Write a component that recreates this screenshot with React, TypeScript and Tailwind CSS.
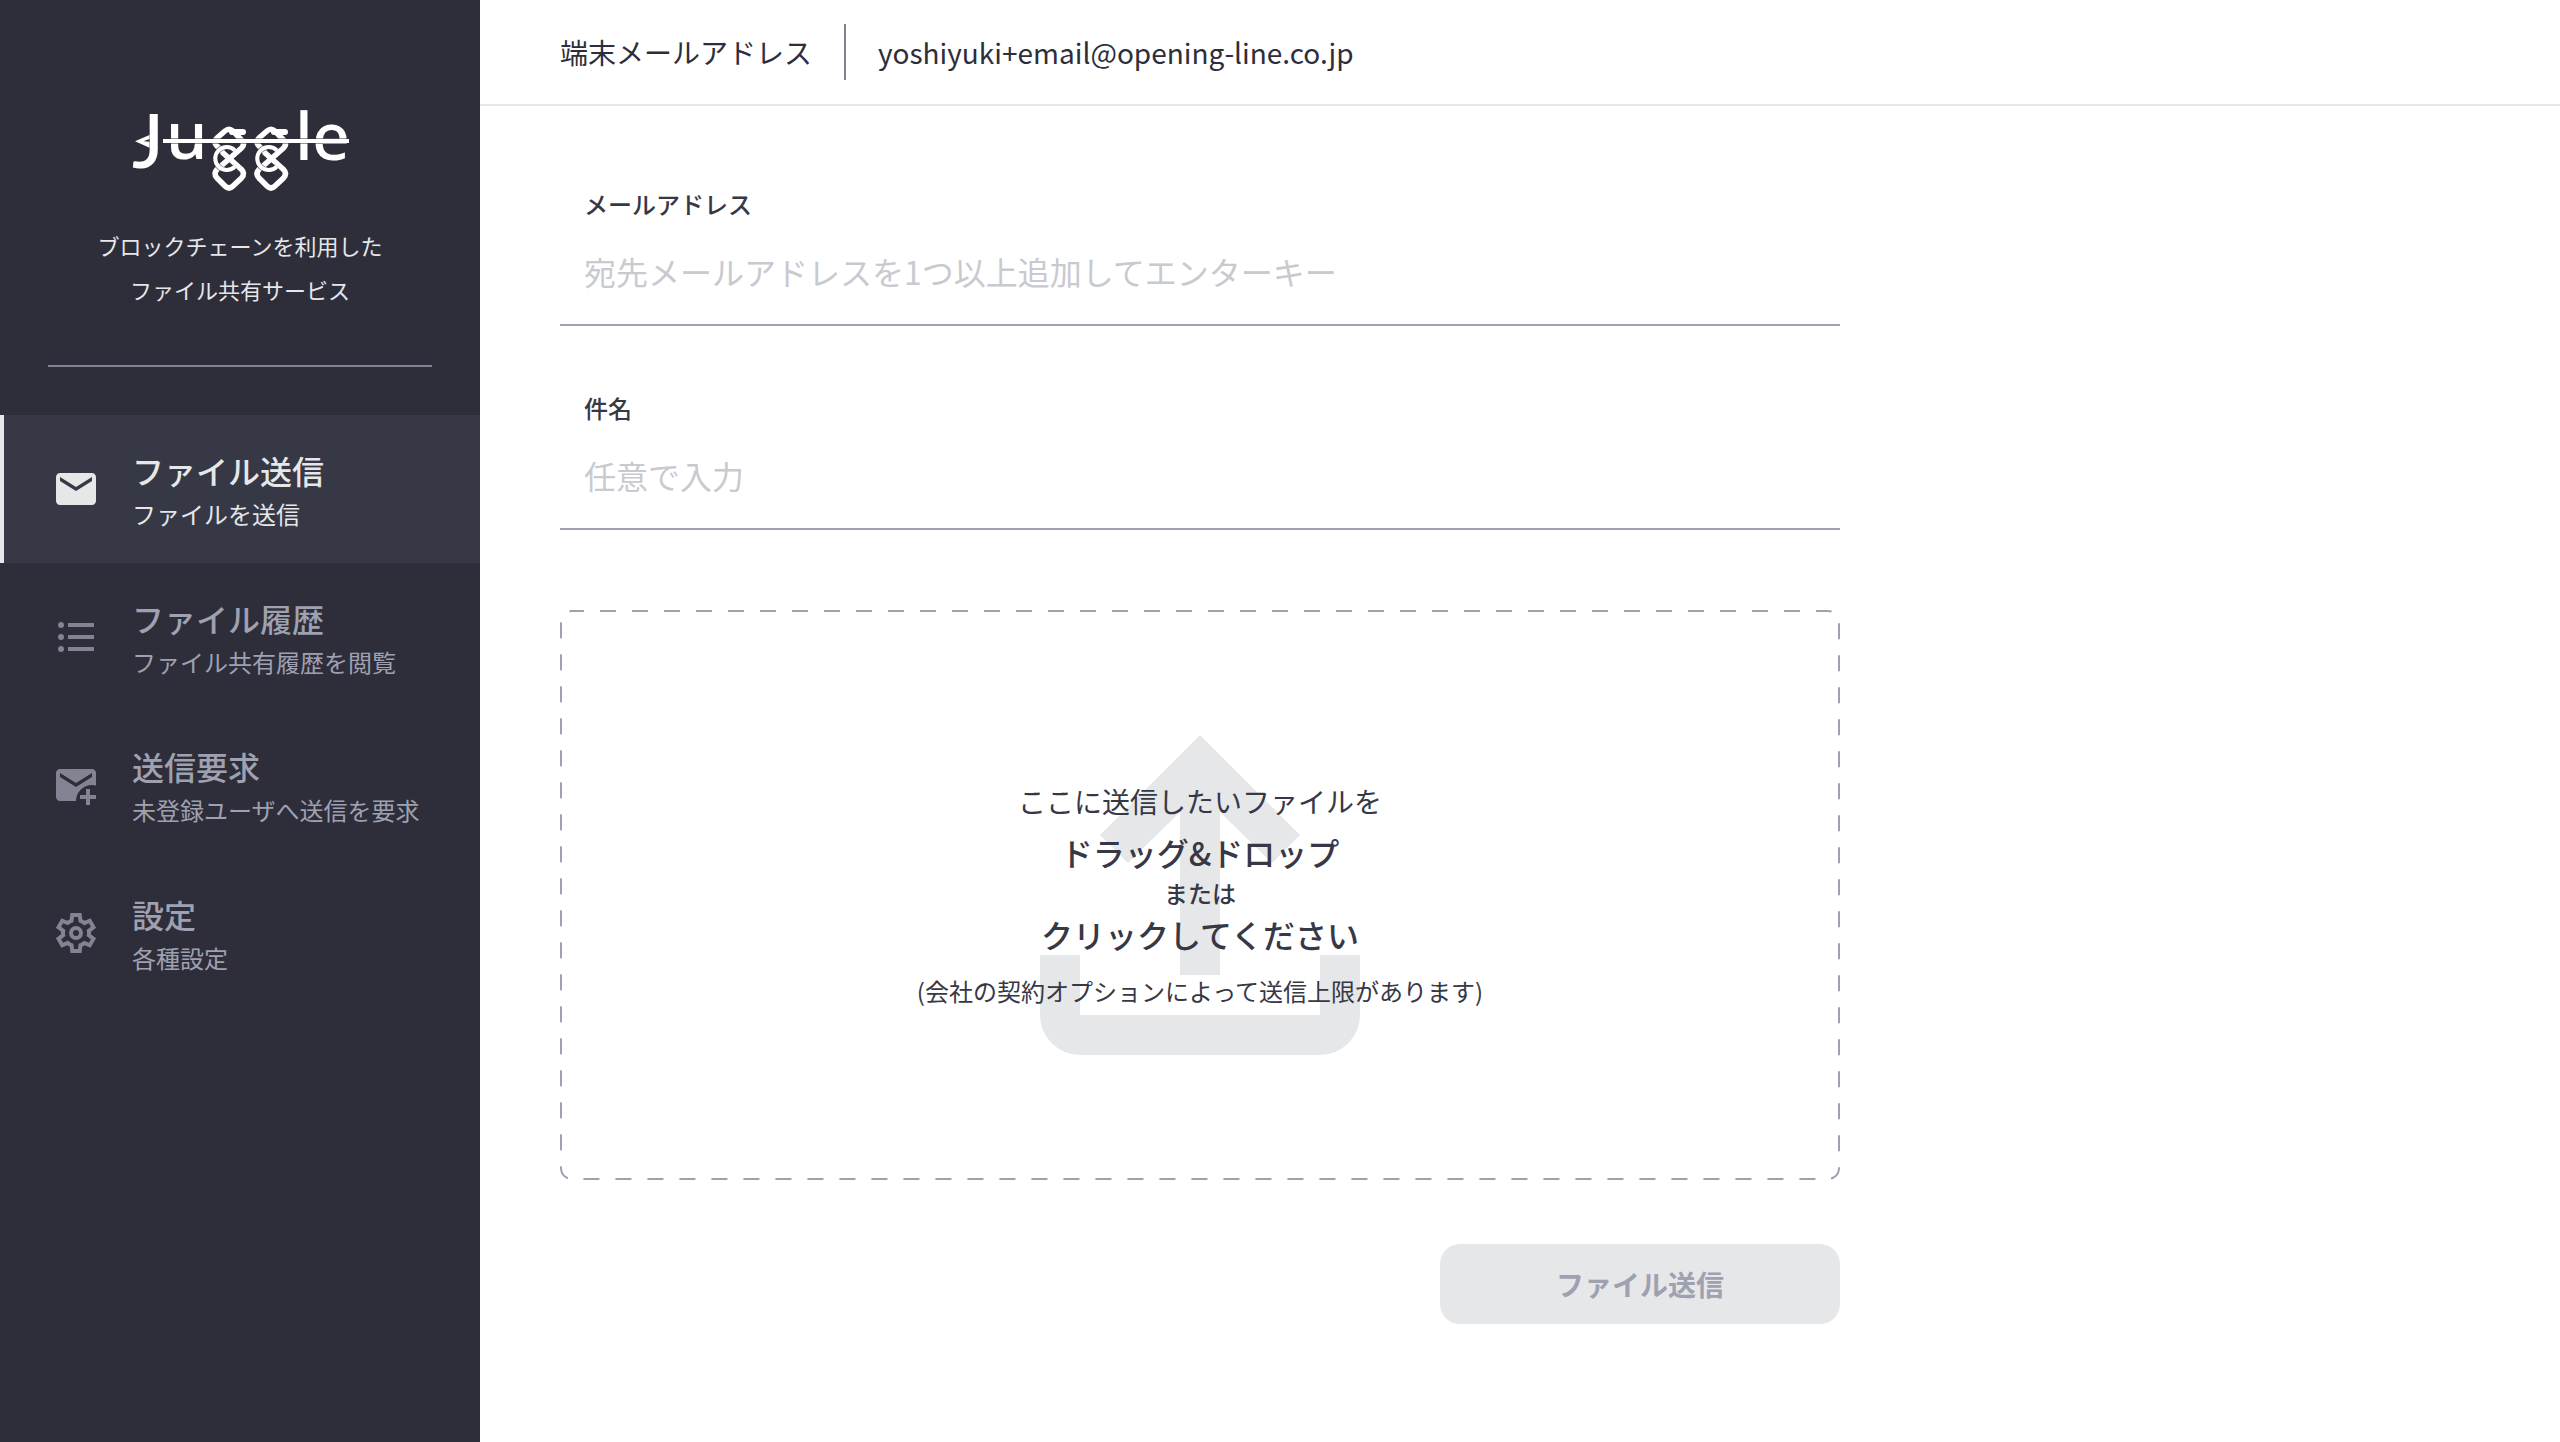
import type * as React from 'react';
import { MdEmail } from 'react-icons/md';

interface NavItemProps {
  title: string;
  description: string;
  icon: React.ReactNode;
  active?: boolean;
}

interface TextFieldProps {
  id: string;
  label: string;
  placeholder: string;
  type?: string;
}

const JuggleLogo: React.FC = () => (
  <svg viewBox="0 -29 220 129" className="w-[220px] h-[129px] text-white" role="img" aria-label="Juggle">
    {/* Letters */}
    <g fill="currentColor" fontSize="66" fontWeight="500" fontFamily="'Noto Sans', 'Open Sans', sans-serif">
      <text x="2" y="59" fontSize="75" fontFamily="Lato, sans-serif">J</text>
      <text x="36" y="50">u</text>
      <text x="165" y="51">l</text>
      <text x="182" y="51">e</text>
    </g>
    {/* Chain links */}
    {[0, 42].map((x) => (
      <g key={x} transform={`translate(${x} 0)`} fill="none" stroke="currentColor">
        <path d="M102 23h11" strokeWidth="6" strokeLinecap="round" />
        <path
          d="M93 43L87 37q-4-4 0-8L95 22q4-3.500 8 0L111.500 31q4 4 0 8L87 60.500q-4 4 0 8.500L95 77q4 4 8 0l8.500-8q4-4.500 0-8.500L92 43"
          strokeWidth="5.500"
        />
        <path d="M105 57.500a11.500 11.500 0 1 1 0-16" className="text-[#2e2e3a]/60" stroke="currentColor" strokeWidth="5.500" />
        <path d="M105 57.500a11.500 11.500 0 1 1 0-16" strokeWidth="4" />
      </g>
    ))}
    {/* Arrow */}
    <path d="M33 32h186" className="text-[#2e2e3a]/50" stroke="currentColor" strokeWidth="6" />
    <path d="M33 32h186" stroke="currentColor" strokeWidth="4" />
    <path d="M5 32.300l14.500-6.300v4l-6 2.300 6 .4v6z" fill="currentColor" />
  </svg>
);

const ListIcon: React.FC = () => (
  <svg viewBox="0 0 24 24" className="w-12 h-12" fill="currentColor" aria-hidden="true">
    <circle cx="4.500" cy="6" r="1.500" />
    <circle cx="4.500" cy="12" r="1.500" />
    <circle cx="4.500" cy="18" r="1.500" />
    <path d="M8 5h13v2H8zM8 11h13v2H8zM8 17h13v2H8z" />
  </svg>
);

const MailAddIcon: React.FC = () => (
  <svg viewBox="0 0 24 24" className="w-12 h-12" fill="currentColor" aria-hidden="true">
    <path d="M20 4H4c-1.100 0-2 .9-2 2v12c0 1.100.9 2 2 2h8c0-4.400 3.600-8 8-8 .7 0 1.400.1 2 .3V6c0-1.100-.9-2-2-2zm0 4-8 5-8-5V6l8 5 8-5v2z" />
    <path d="M19 14v3h3v2h-3v3h-2v-3h-3v-2h3v-3z" />
  </svg>
);

const SettingsIcon: React.FC = () => (
  <svg viewBox="0 0 24 24" className="w-12 h-12" fill="currentColor" fillRule="evenodd" aria-hidden="true">
    <path d="m9.250 22-.4-3.200q-.325-.125-.612-.3-.288-.175-.563-.375L4.700 19.375l-2.750-4.750 2.575-1.950Q4.500 12.500 4.500 12.337v-.675q0-.162.025-.337L1.950 9.375l2.750-4.750 2.975 1.250q.275-.2.575-.375.3-.175.6-.3l.4-3.200h5.500l.4 3.200q.325.125.613.3.287.175.562.375l2.975-1.250 2.750 4.750-2.575 1.950q.025.175.025.337v.675q0 .163-.05.338l2.575 1.950-2.750 4.750-2.950-1.250q-.275.2-.575.375-.3.175-.6.3l-.4 3.200ZM11 20h1.975l.350-2.650q.775-.2 1.438-.588.662-.387 1.212-.937l2.475 1.025.975-1.700-2.150-1.625q.125-.350.175-.737.050-.388.050-.788t-.050-.788q-.050-.387-.175-.737l2.150-1.625-.975-1.700-2.475 1.050q-.550-.575-1.212-.963-.663-.387-1.438-.587L13 4h-1.975l-.350 2.650q-.775.2-1.437.587-.663.388-1.213.938L5.550 7.150l-.975 1.700 2.150 1.600q-.125.375-.175.750-.050.375-.050.800 0 .400.050.775t.175.750l-2.150 1.625.975 1.700 2.475-1.050q.550.575 1.213.962.662.388 1.437.588Z" />
    <circle cx="12" cy="12" r="2.500" fill="none" stroke="currentColor" strokeWidth="2" />
  </svg>
);

const NavItem: React.FC<NavItemProps> = ({ title, description, icon, active = false }) => (
  <li>
    <a
      href="#"
      aria-current={active ? 'page' : undefined}
      className={`flex items-center h-[148px] pl-12 border-l-4 ${
        active ? 'bg-[#373845] border-[#e5e7e9] text-[#e5e7e9]' : 'border-transparent text-[#9fa1b1]'
      }`}
    >
      <span className={`shrink-0 w-12 ${active ? '' : 'text-[#838393]'}`}>{icon}</span>
      <span className="flex flex-col ml-8 pt-0.5">
        <span className="text-[32px] leading-[48px] font-medium">{title}</span>
        <span className="text-2xl leading-10">{description}</span>
      </span>
    </a>
  </li>
);

const TextField: React.FC<TextFieldProps> = ({ id, label, placeholder, type = 'text' }) => (
  <div className="flex flex-col pb-1 border-b-2 border-[#9fa1b1]">
    <label htmlFor={id} className="px-6 text-2xl leading-9 font-medium">
      {label}
    </label>
    <input
      id={id}
      type={type}
      placeholder={placeholder}
      className="w-full h-[98px] px-6 text-[32px] bg-transparent outline-none placeholder:text-[#c9c9d0]"
    />
  </div>
);

const DropZone: React.FC = () => (
  <button type="button" className="relative flex flex-col items-center justify-center w-full h-[570px]">
    {/* Dashed border */}
    <svg className="absolute inset-0 w-full h-full rounded-xl text-[#9fa1b1]" aria-hidden="true">
      <rect
        width="100%"
        height="100%"
        rx="12"
        fill="none"
        stroke="currentColor"
        strokeWidth="4"
        strokeDasharray="16 16"
        strokeDashoffset="4"
      />
    </svg>

    {/* Upload mark behind the text */}
    <span className="absolute inset-0 flex items-center justify-center text-[#e5e7e9]">
      <svg viewBox="0 0 320 320" className="w-80 h-80" fill="currentColor" aria-hidden="true">
        <path d="M160 0l100 100-28 28-52-51v163h-40V77l-52 51-28-28z" />
        <path d="M0 220h40v60h240v-60h40v60a40 40 0 0 1-40 40H40a40 40 0 0 1-40-40z" />
      </svg>
    </span>

    <span className="relative mb-2 text-[28px] leading-10">ここに送信したいファイルを</span>
    <span className="relative text-[32px] leading-[46px] font-medium">ドラッグ&amp;ドロップ</span>
    <span className="relative text-2xl leading-9 font-medium">または</span>
    <span className="relative text-[32px] leading-[46px] font-medium">クリックしてください</span>
    <span className="relative mt-4 text-2xl leading-9">(会社の契約オプションによって送信上限があります)</span>
  </button>
);

export default function App() {
  return (
    <div className="flex min-h-screen bg-white text-[#373845] font-['Noto_Sans_CJK_JP',sans-serif]">
      <aside className="flex flex-col shrink-0 w-[480px] bg-[#2e2e3a]">
        <div className="flex flex-col items-center mx-12 pt-20 pb-[54px] border-b-2 border-[#838393]">
          <JuggleLogo />
          <p className="mt-3.5 text-[22px] leading-[44px] text-center text-[#e5e7e9]">
            ブロックチェーンを利用した
            <br />
            ファイル共有サービス
          </p>
        </div>

        <nav className="mt-12">
          <ul>
            <NavItem title="ファイル送信" description="ファイルを送信" icon={<MdEmail className="w-12 h-12" />} active />
            <NavItem title="ファイル履歴" description="ファイル共有履歴を閲覧" icon={<ListIcon />} />
            <NavItem title="送信要求" description="未登録ユーザへ送信を要求" icon={<MailAddIcon />} />
            <NavItem title="設定" description="各種設定" icon={<SettingsIcon />} />
          </ul>
        </nav>
      </aside>

      <div className="flex-1 min-w-0">
        <header className="flex items-center h-[106px] px-20 border-b-2 border-[#e5e7e9] text-[28px] text-[#2e2e3a]">
          <span className="pr-8">端末メールアドレス</span>
          <span className="h-14 pl-8 flex items-center border-l-2 border-[#838393]">
            yoshiyuki+email@opening-line.co.jp
          </span>
        </header>

        <main className="px-20 py-20">
          <form className="max-w-[1280px]">
            <div className="flex flex-col gap-16 mb-20">
              <TextField
                id="email"
                label="メールアドレス"
                placeholder="宛先メールアドレスを1つ以上追加してエンターキー"
              />
              <TextField id="subject" label="件名" placeholder="任意で入力" />
            </div>

            <DropZone />

            <div className="flex justify-end mt-16">
              <button
                type="submit"
                disabled
                className="w-[400px] h-20 rounded-[20px] bg-[#e5e7e9] text-[28px] font-bold text-[#9fa1b1]"
              >
                ファイル送信
              </button>
            </div>
          </form>
        </main>
      </div>
    </div>
  );
}
